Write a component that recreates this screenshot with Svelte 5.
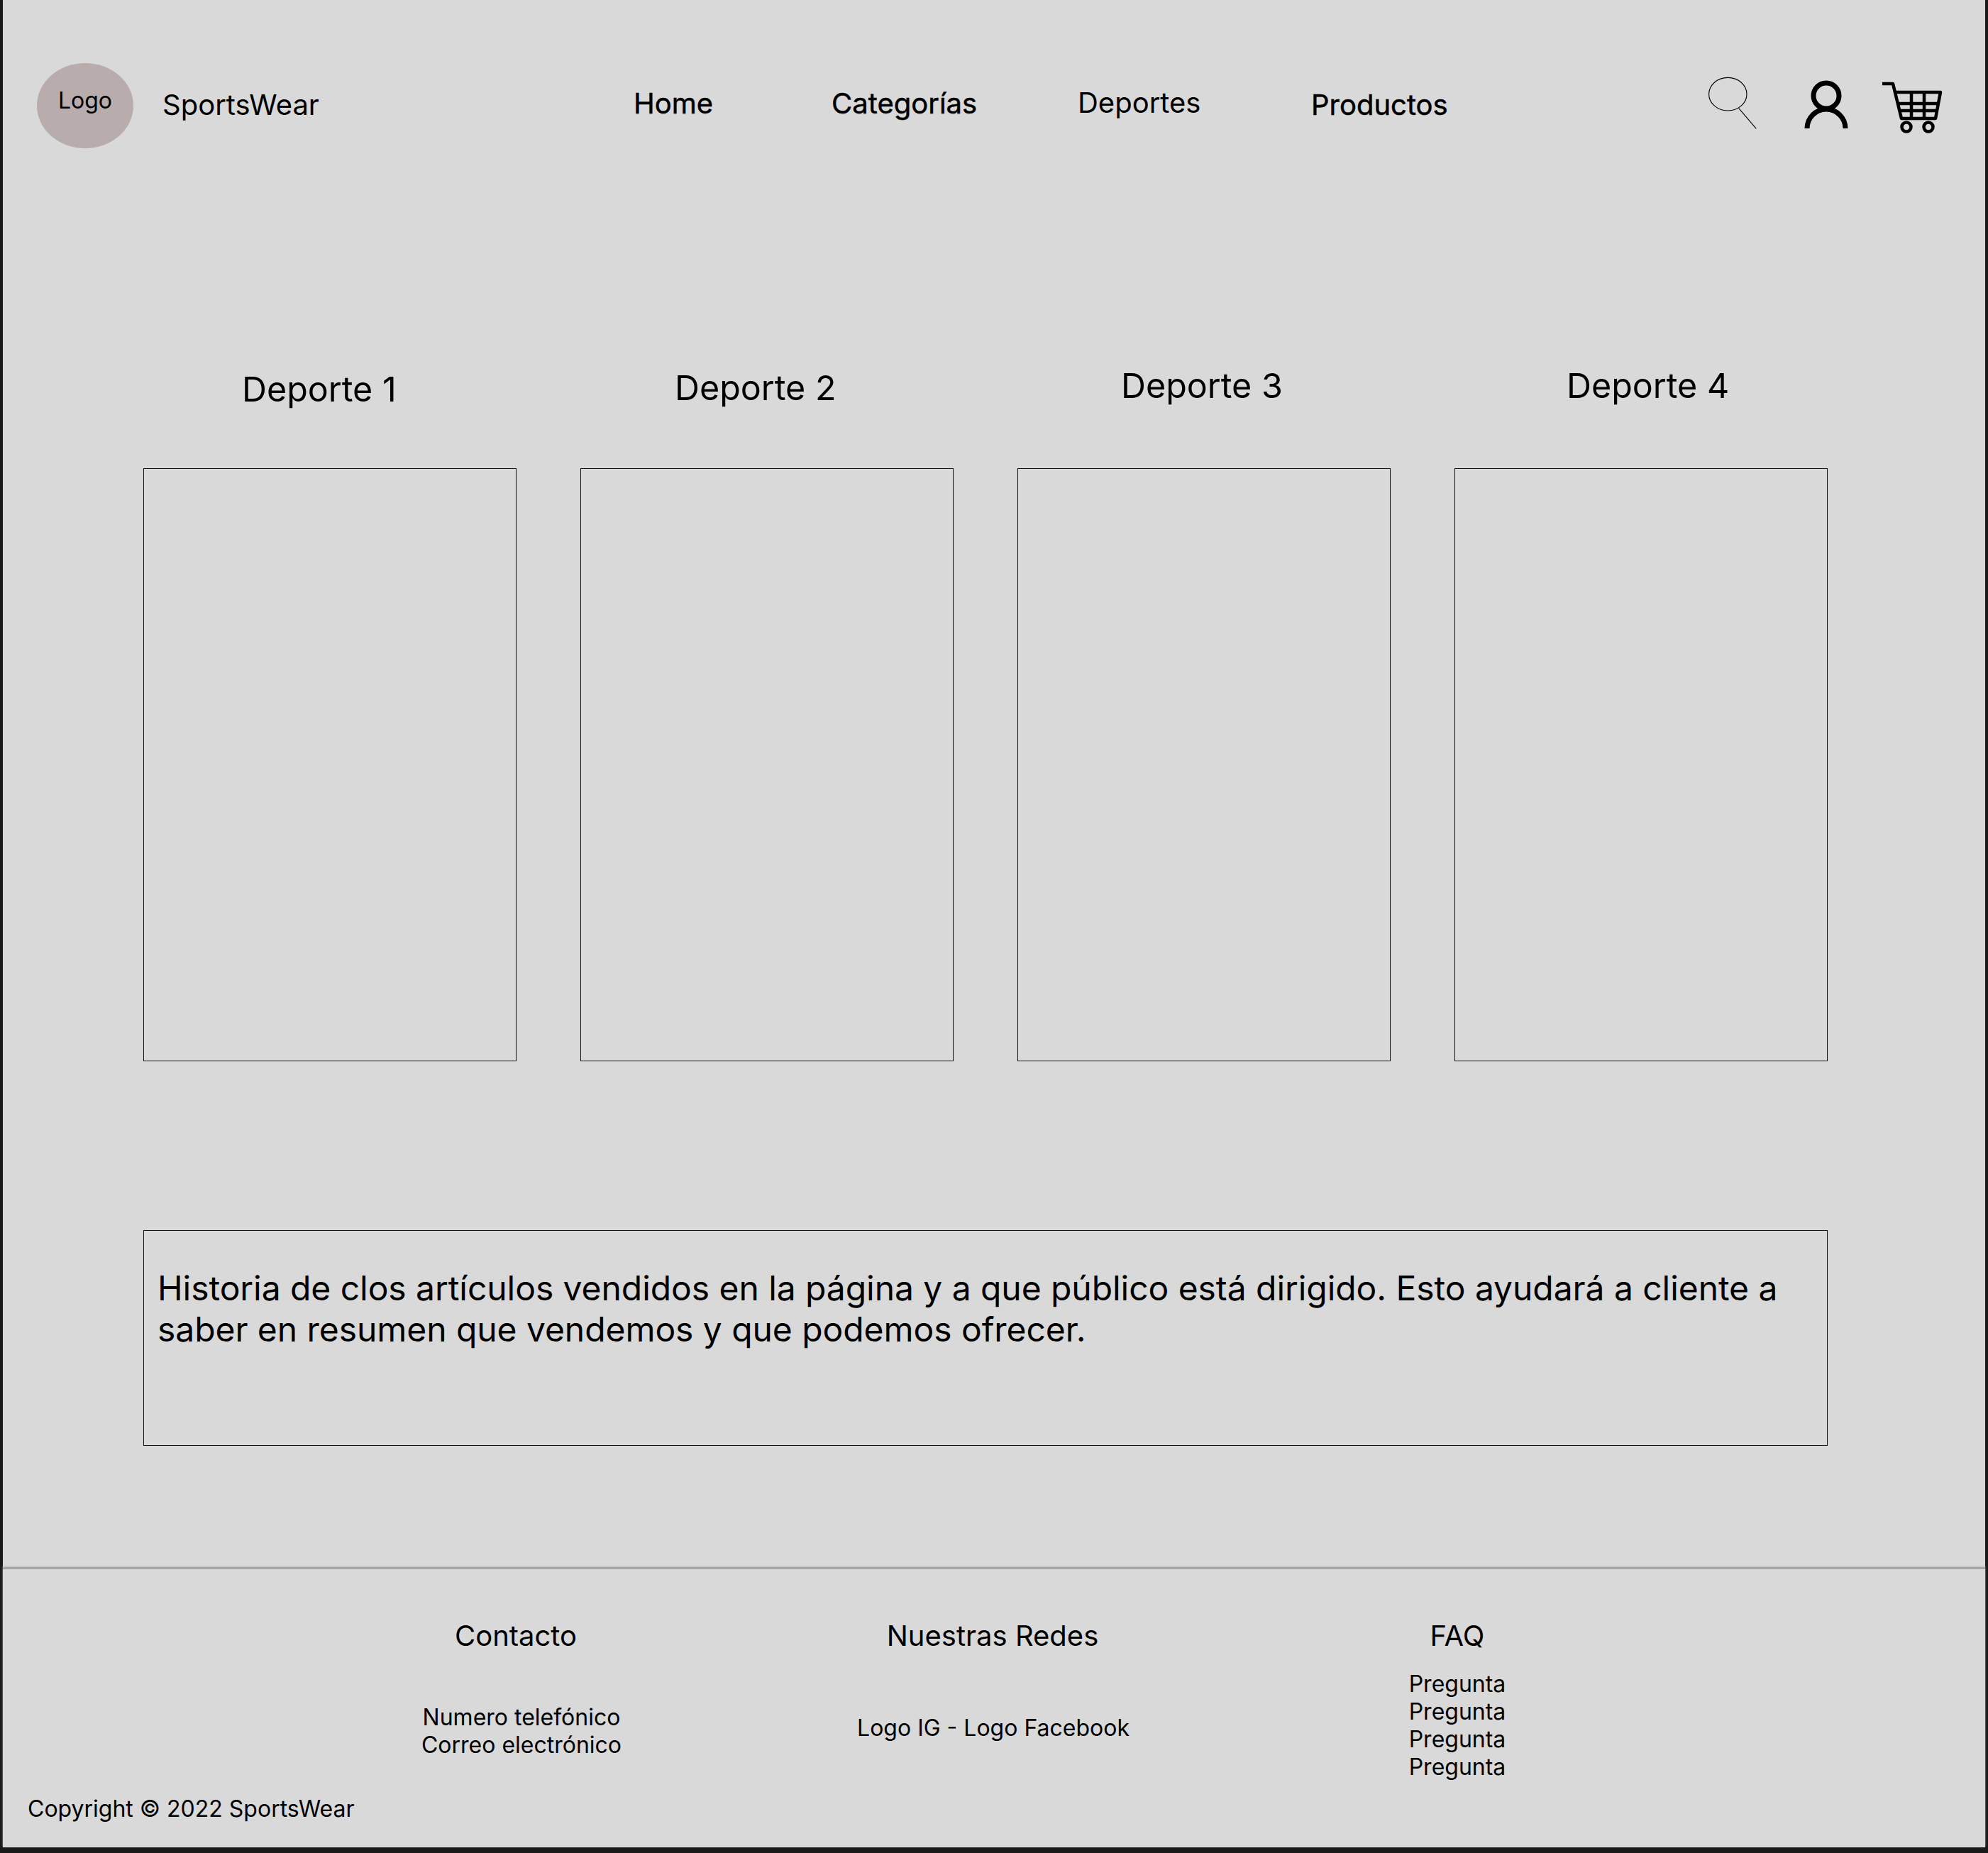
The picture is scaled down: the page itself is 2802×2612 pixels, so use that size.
<script>
	const sports = [
		{ name: "Deporte 1", cls: "s1" },
		{ name: "Deporte 2", cls: "s2" },
		{ name: "Deporte 3", cls: "s3" },
		{ name: "Deporte 4", cls: "s4" }
	];
	const preguntas = ["Pregunta", "Pregunta", "Pregunta", "Pregunta"];
</script>

<div class="frame">
	<div class="panel">
		<header>
			<div class="logo">Logo</div>
			<div class="brand">SportsWear</div>
			<nav>
				<a class="home">Home</a>
				<a class="cat">Categorías</a>
				<a class="dep">Deportes</a>
				<a class="prod">Productos</a>
			</nav>
			<div class="icons">
				<svg class="search" width="75" height="80" viewBox="0 0 75 80" fill="none" stroke="#000">
					<ellipse cx="30.3" cy="27.7" rx="26.7" ry="23.3" stroke-width="1.1" />
					<path d="M45.7 47.7 70.3 76.3" stroke-width="1.1" />
				</svg>
				<svg class="user" width="68" height="72" viewBox="0 0 68 72" fill="none" stroke="#000" stroke-width="7">
					<circle cx="34" cy="25" r="18" />
					<path d="M7 71A27 27 0 0 1 61 71" />
				</svg>
				<svg class="cart" width="90" height="80" viewBox="0 0 90 80" fill="none" stroke="#000" stroke-width="4.5" stroke-linejoin="round">
					<path d="M3 8H18L30 57H78L85 20H21" />
					<path d="M25 36H81M28 46H79M44 20V57M62 20V57" />
					<circle cx="37" cy="69" r="6.5" />
					<circle cx="68" cy="69" r="6.5" />
				</svg>
			</div>
		</header>

		<section class="sports">
			<div class="titles">
				{#each sports as s}
					<h2 class={s.cls}>{s.name}</h2>
				{/each}
			</div>
			<div class="cards">
				{#each sports as s}
					<div class="card"></div>
				{/each}
			</div>
		</section>

		<section class="story">
			<p>Historia de clos artículos vendidos en la página y a que público está dirigido. Esto ayudará a cliente a saber en resumen que vendemos y que podemos ofrecer.</p>
		</section>

		<footer>
			<div class="cols">
				<div class="col contact">
					<h3>Contacto</h3>
					<p>Numero telefónico<br />Correo electrónico</p>
				</div>
				<div class="col social">
					<h3>Nuestras Redes</h3>
					<p>Logo IG - Logo Facebook</p>
				</div>
				<div class="col faq">
					<h3>FAQ</h3>
					<p>
						{#each preguntas as q}
							{q}<br />
						{/each}
					</p>
				</div>
			</div>
			<div class="copy">Copyright © 2022 SportsWear</div>
		</footer>
	</div>
</div>

<style>
	:global(body) {
		margin: 0;
		background: #1a1a1a;
	}

	.frame {
		width: 2802px;
		height: 2612px;
		background: #1a1a1a;
		font-family: Inter, "Liberation Sans", sans-serif;
		font-optical-sizing: none;
		color: #000;
		overflow: hidden;
	}

	.panel {
		width: 2794px;
		height: 2604px;
		margin-left: 4px;
		background: #d9d9d9;
		display: flex;
		flex-direction: column;
	}

	header {
		height: 209px;
		box-sizing: border-box;
		padding: 89px 0 0 48px;
		display: flex;
		align-items: flex-start;
	}

	.logo {
		width: 136px;
		height: 120px;
		border-radius: 50%;
		background: #b8acac;
		text-align: center;
		font-size: 32px;
		line-height: 39px;
		padding-top: 33px;
		box-sizing: border-box;
		flex: none;
	}

	.brand {
		margin: 35px 0 0 41px;
		font-size: 40px;
		line-height: 48px;
		flex: none;
		width: 219px;
	}

	nav {
		display: flex;
		margin-left: 445px;
		font-size: 40px;
		line-height: 48px;
		flex: none;
		width: 1147px;
	}

	.home,
	.cat,
	.prod {
		-webkit-text-stroke: 0.5px #000;
		flex: none;
	}

	.home {
		margin-top: 33px;
		width: 279px;
	}

	.cat {
		margin-top: 33px;
		width: 347px;
	}

	.dep {
		margin-top: 32px;
		width: 329px;
		flex: none;
	}

	.prod {
		margin-top: 35px;
	}

	.icons {
		display: flex;
		align-items: flex-start;
		margin-left: 365px;
		flex: none;
	}

	.search {
		margin-top: 16px;
		flex: none;
	}

	.user {
		margin: 21px 0 0 60px;
		flex: none;
	}

	.cart {
		margin: 21px 0 0 42px;
		flex: none;
	}

	.sports {
		padding: 0 0 0 198px;
	}

	.titles {
		height: 451px;
		box-sizing: border-box;
		display: flex;
		align-items: flex-start;
	}

	h2 {
		margin: 0;
		font-size: 48.4px;
		font-weight: 400;
		line-height: 58px;
		flex: none;
		width: 629px;
	}

	.s1 {
		margin: 311px 0 0 139px;
		width: 610px;
	}

	.s2 {
		margin-top: 309px;
	}

	.s3 {
		margin-top: 306px;
		width: 628px;
	}

	.s4 {
		margin-top: 306px;
	}

	.cards {
		display: flex;
		gap: 90px;
	}

	.card {
		width: 526px;
		height: 836px;
		box-sizing: border-box;
		border: 1px solid #111;
		flex: none;
	}

	.story {
		width: 2374px;
		height: 304px;
		box-sizing: border-box;
		margin: 238px 0 0 198px;
		border: 1px solid #111;
		padding: 52px 19px 0;
	}

	.story p {
		margin: 0;
		font-size: 48px;
		line-height: 58px;
		letter-spacing: -0.06px;
	}

	footer {
		margin-top: 171px;
		flex: 1;
		border-top: 3px solid #a6a6a6;
		box-shadow: 0 -1px 2px #bdbdbd;
		font-size: 32px;
		line-height: 39px;
	}

	.cols {
		display: flex;
		align-items: flex-start;
		height: 320px;
	}

	.col {
		flex: none;
		text-align: center;
		white-space: nowrap;
	}

	h3 {
		margin: 0;
		font-size: 40px;
		font-weight: 400;
		line-height: 48px;
	}

	.col p {
		margin: 0;
	}

	.contact {
		width: 300px;
		margin-left: 581px;
		padding-top: 70px;
	}

	.contact h3 {
		margin-right: 16px;
	}

	.contact p {
		margin-top: 71px;
	}

	.social {
		width: 400px;
		margin-left: 315px;
		padding-top: 70px;
	}

	.social h3 {
		margin-right: 2px;
	}

	.social p {
		margin-top: 86px;
	}

	.faq {
		width: 200px;
		margin-left: 354px;
		padding-top: 70px;
	}

	.faq p {
		margin-top: 24px;
	}

	.copy {
		margin: -2px 0 0 35px;
	}
</style>
